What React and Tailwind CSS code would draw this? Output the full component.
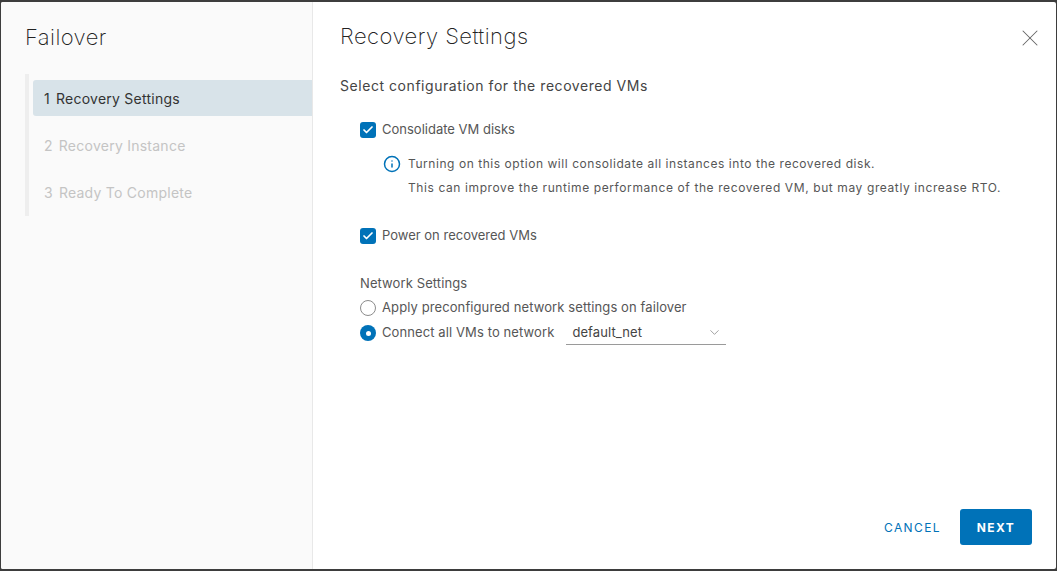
import { Check, ChevronDown, Info, X } from 'lucide-react'

const FONT = 'font-["Inter","Noto_Sans",sans-serif]'

const STEPS = [
  { n: 1, label: 'Recovery Settings', active: true },
  { n: 2, label: 'Recovery Instance' },
  { n: 3, label: 'Ready To Complete' },
]

function Checkbox({ label }) {
  return (
    <div className="flex items-center gap-[6px] h-4">
      <span className="w-4 h-4 rounded-[3px] bg-[#0072b8] flex items-center justify-center">
        <Check size={12} strokeWidth={3.5} color="white" />
      </span>
      <span className="text-[13px] tracking-[0px] text-[#565656]">{label}</span>
    </div>
  )
}

function Radio({ checked, label }) {
  return (
    <div className="flex items-center gap-[6px] h-4">
      {checked ? (
        <span className="w-4 h-4 rounded-full bg-[#0072b8] flex items-center justify-center">
          <span className="w-[5px] h-[5px] rounded-full bg-white"></span>
        </span>
      ) : (
        <span className="w-4 h-4 rounded-full border border-[#8c8c8c] bg-white"></span>
      )}
      <span className="text-[13px] tracking-[0.1px] text-[#565656]">{label}</span>
    </div>
  )
}

function Sidebar() {
  return (
    <aside className="w-[312px] shrink-0 bg-[#fafafa] border-r border-[#e8e8e8] pl-[24px] pt-[21px]">
      <h1 className="text-[22px] leading-[28px] font-extralight tracking-[0.4px] text-[#222]">Failover</h1>
      <div className="mt-[23px] border-l-[4px] border-[#eeeeee] pl-[4px] pt-[6px] h-[142px] flex flex-col gap-[11px]">
        {STEPS.map(s => (
          <div
            key={s.n}
            className={
              s.active
                ? 'h-[36px] shrink-0 pt-[1px] rounded-l-[3px] bg-[#d8e3e9] pl-[11px] flex items-center gap-[6px] text-[14px] tracking-[0.25px] text-[#333]'
                : 'h-[36px] shrink-0 pt-[1px] pl-[11px] flex items-center gap-[6px] text-[14px] tracking-[0.25px] text-[#c4c4c4]'
            }
          >
            <span>{s.n}</span>
            <span>{s.label}</span>
          </div>
        ))}
      </div>
    </aside>
  )
}

export default function App() {
  return (
    <div className={`w-[1057px] h-[571px] bg-[#3d3d3d] pt-[2px] pb-[2px] pl-[1px] pr-[1px] ${FONT}`}>
      <div className="h-full flex bg-white rounded-[2px] overflow-hidden">
        <Sidebar />
        <main className="flex-1 flex flex-col pl-[27px] pr-[24px] pt-[20px] pb-[24px]">
          <div className="h-[28px] flex items-start justify-between">
            <h2 className="text-[22px] leading-[28px] font-extralight tracking-[0.45px] text-[#222]">Recovery Settings</h2>
            <X size={28} strokeWidth={0.9} color="#666" className="mt-[2px] mr-[-12px]" />
          </div>
          <p className="mt-[26px] text-[14px] leading-[20px] tracking-[0.55px] text-[#444]">Select configuration for the recovered VMs</p>

          <div className="pl-[20px] mt-[26px]">
            <Checkbox label="Consolidate VM disks" />
            <div className="mt-[14px] pl-[23px] flex gap-[7px]">
              <Info size={18} strokeWidth={2} color="#0072b8" className="mt-[3px] shrink-0" />
              <div className="text-[12px] leading-[24px] tracking-[0.55px] text-[#565656]">
                <div>Turning on this option will consolidate all instances into the recovered disk.</div>
                <div className="tracking-[0.6px]">This can improve the runtime performance of the recovered VM, but may greatly increase RTO.</div>
              </div>
            </div>
            <div className="mt-[28px]">
              <Checkbox label="Power on recovered VMs" />
            </div>
            <div className="mt-[30px] text-[13px] leading-[18px] tracking-[0.1px] text-[#565656]">Network Settings</div>
            <div className="mt-[8px]">
              <Radio label="Apply preconfigured network settings on failover" />
            </div>
            <div className="mt-[5px] flex items-center">
              <Radio checked label="Connect all VMs to network" />
              <div className="ml-[12px] w-[160px] h-[24px] border-b border-[#9a9a9a] pl-[6px] pr-[4px] flex items-center justify-between text-[13px] tracking-[0.1px] text-[#444]">
                <span>default_net</span>
                <ChevronDown size={15} strokeWidth={1.1} color="#777" />
              </div>
            </div>
          </div>

          <div className="mt-auto flex items-center justify-end gap-[19px]">
            <button className="pt-[1px] text-[12px] font-normal tracking-[1.4px] text-[#0072b8]">CANCEL</button>
            <button className="w-[72px] h-[36px] pt-[1px] rounded-[3px] bg-[#0072b8] text-white text-[12px] font-bold tracking-[1.4px]">NEXT</button>
          </div>
        </main>
      </div>
    </div>
  )
}
